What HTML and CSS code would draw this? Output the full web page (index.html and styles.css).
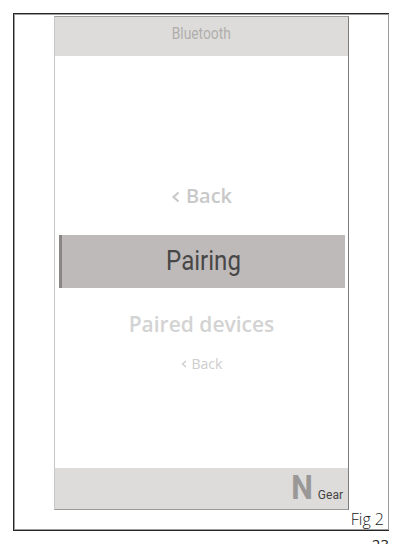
FILE: index.html
```html
<!DOCTYPE html>
<html>
<head>
<meta charset="utf-8">
<link rel="stylesheet" href="styles.css">
</head>
<body>
<div class="frame">
  <div class="phone">
    <div class="header"><span class="narrow">Bluetooth</span></div>
    <div class="menu">
      <div class="item back1"><svg class="chev" width="9" height="12" viewBox="0 0 9 12"><polyline points="7.5,1.5 2.5,6 7.5,10.5" fill="none" stroke="currentColor" stroke-width="2.2"/></svg>Back</div>
      <div class="selected"><span class="narrow">Pairing</span></div>
      <div class="item paired">Paired devices</div>
      <div class="item back2"><svg class="chev2" width="6" height="8" viewBox="0 0 6 8"><polyline points="5,1 1.5,4 5,7" fill="none" stroke="currentColor" stroke-width="1.4"/></svg>Back</div>
    </div>
    <div class="footer">
      <span class="gear-n">N</span>
      <span class="gear-label">Gear</span>
    </div>
  </div>
  <div class="fig">Fig 2</div>
</div>
<div class="page">23</div>
</body>
</html>
```

FILE: styles.css
```css
html, body {
  margin: 0;
  padding: 0;
  background: #fff;
}
body {
  padding: 13px 0 0 13px;
  font-family: "Open Sans", "Noto Sans", sans-serif;
  width: 389px;
  height: 544px;
  overflow: hidden;
  box-sizing: border-box;
}
.frame {
  width: 377px;
  height: 518px;
  box-sizing: border-box;
  border: 1px solid #262626;
  box-shadow: inset 1px 1px 0 #9c9c9c, inset -1px -1px 0 #9c9c9c;
  padding: 2px 0 0 40px;
  display: flex;
  flex-direction: column;
}
.phone {
  width: 295px;
  height: 494px;
  box-sizing: border-box;
  border-top: 1px solid #9d9d9d;
  border-left: 1px solid #c6c6c6;
  border-right: 1px solid #7c7c7c;
  border-bottom: 1px solid #9a9a9a;
  display: flex;
  flex-direction: column;
}
.narrow {
  display: inline-block;
  transform: scaleX(0.86);
}
.header {
  height: 39px;
  background: #dddcda;
  color: #b0aeac;
  font-family: "Roboto", sans-serif;
  font-size: 16px;
  line-height: 18px;
  padding-top: 8px;
  box-sizing: border-box;
  text-align: center;
}
.menu {
  flex: 1;
  display: flex;
  flex-direction: column;
  align-items: center;
  padding-top: 127px;
}
.item {
  font-weight: 600;
  white-space: nowrap;
}
.chev {
  vertical-align: 0;
  margin-right: 6px;
}
.chev2 {
  vertical-align: 1px;
  margin-right: 5px;
}
.back1 {
  font-size: 20px;
  line-height: 26px;
  color: #c9c9c9;
}
.selected {
  align-self: flex-start;
  margin: 26px 0 0 4px;
  width: 286px;
  height: 53px;
  box-sizing: border-box;
  background: #bebab9;
  border-left: 3px solid #898685;
  display: flex;
  align-items: center;
  justify-content: center;
  color: #474747;
  font-family: "Roboto", sans-serif;
  font-size: 28px;
  padding-bottom: 2px;
}
.paired {
  margin-top: 22px;
  font-size: 21px;
  line-height: 28px;
  color: #d3d3d3;
}
.back2 {
  margin-top: 17px;
  font-size: 14px;
  line-height: 18px;
  color: #cdcdcd;
  font-weight: 500;
}
.footer {
  height: 41px;
  background: #dddcda;
  display: flex;
  justify-content: flex-end;
  align-items: baseline;
  padding-right: 5px;
  box-sizing: border-box;
}
.gear-n {
  font-family: "Roboto", sans-serif;
  font-weight: 700;
  font-size: 34px;
  line-height: 38px;
  color: #999897;
  margin-right: 4px;
  display: inline-block;
  transform: scaleX(0.9);
}
.gear-label {
  font-family: "Roboto", sans-serif;
  font-size: 12px;
  color: #444;
}
.fig {
  margin-top: auto;
  margin-bottom: 3px;
  align-self: flex-end;
  padding-right: 5px;
  font-size: 16px;
  font-weight: 300;
  line-height: 16px;
  color: #222;
}
.page {
  margin-top: 3px;
  width: 376px;
  text-align: right;
  font-size: 15px;
  color: #222;
}
```
